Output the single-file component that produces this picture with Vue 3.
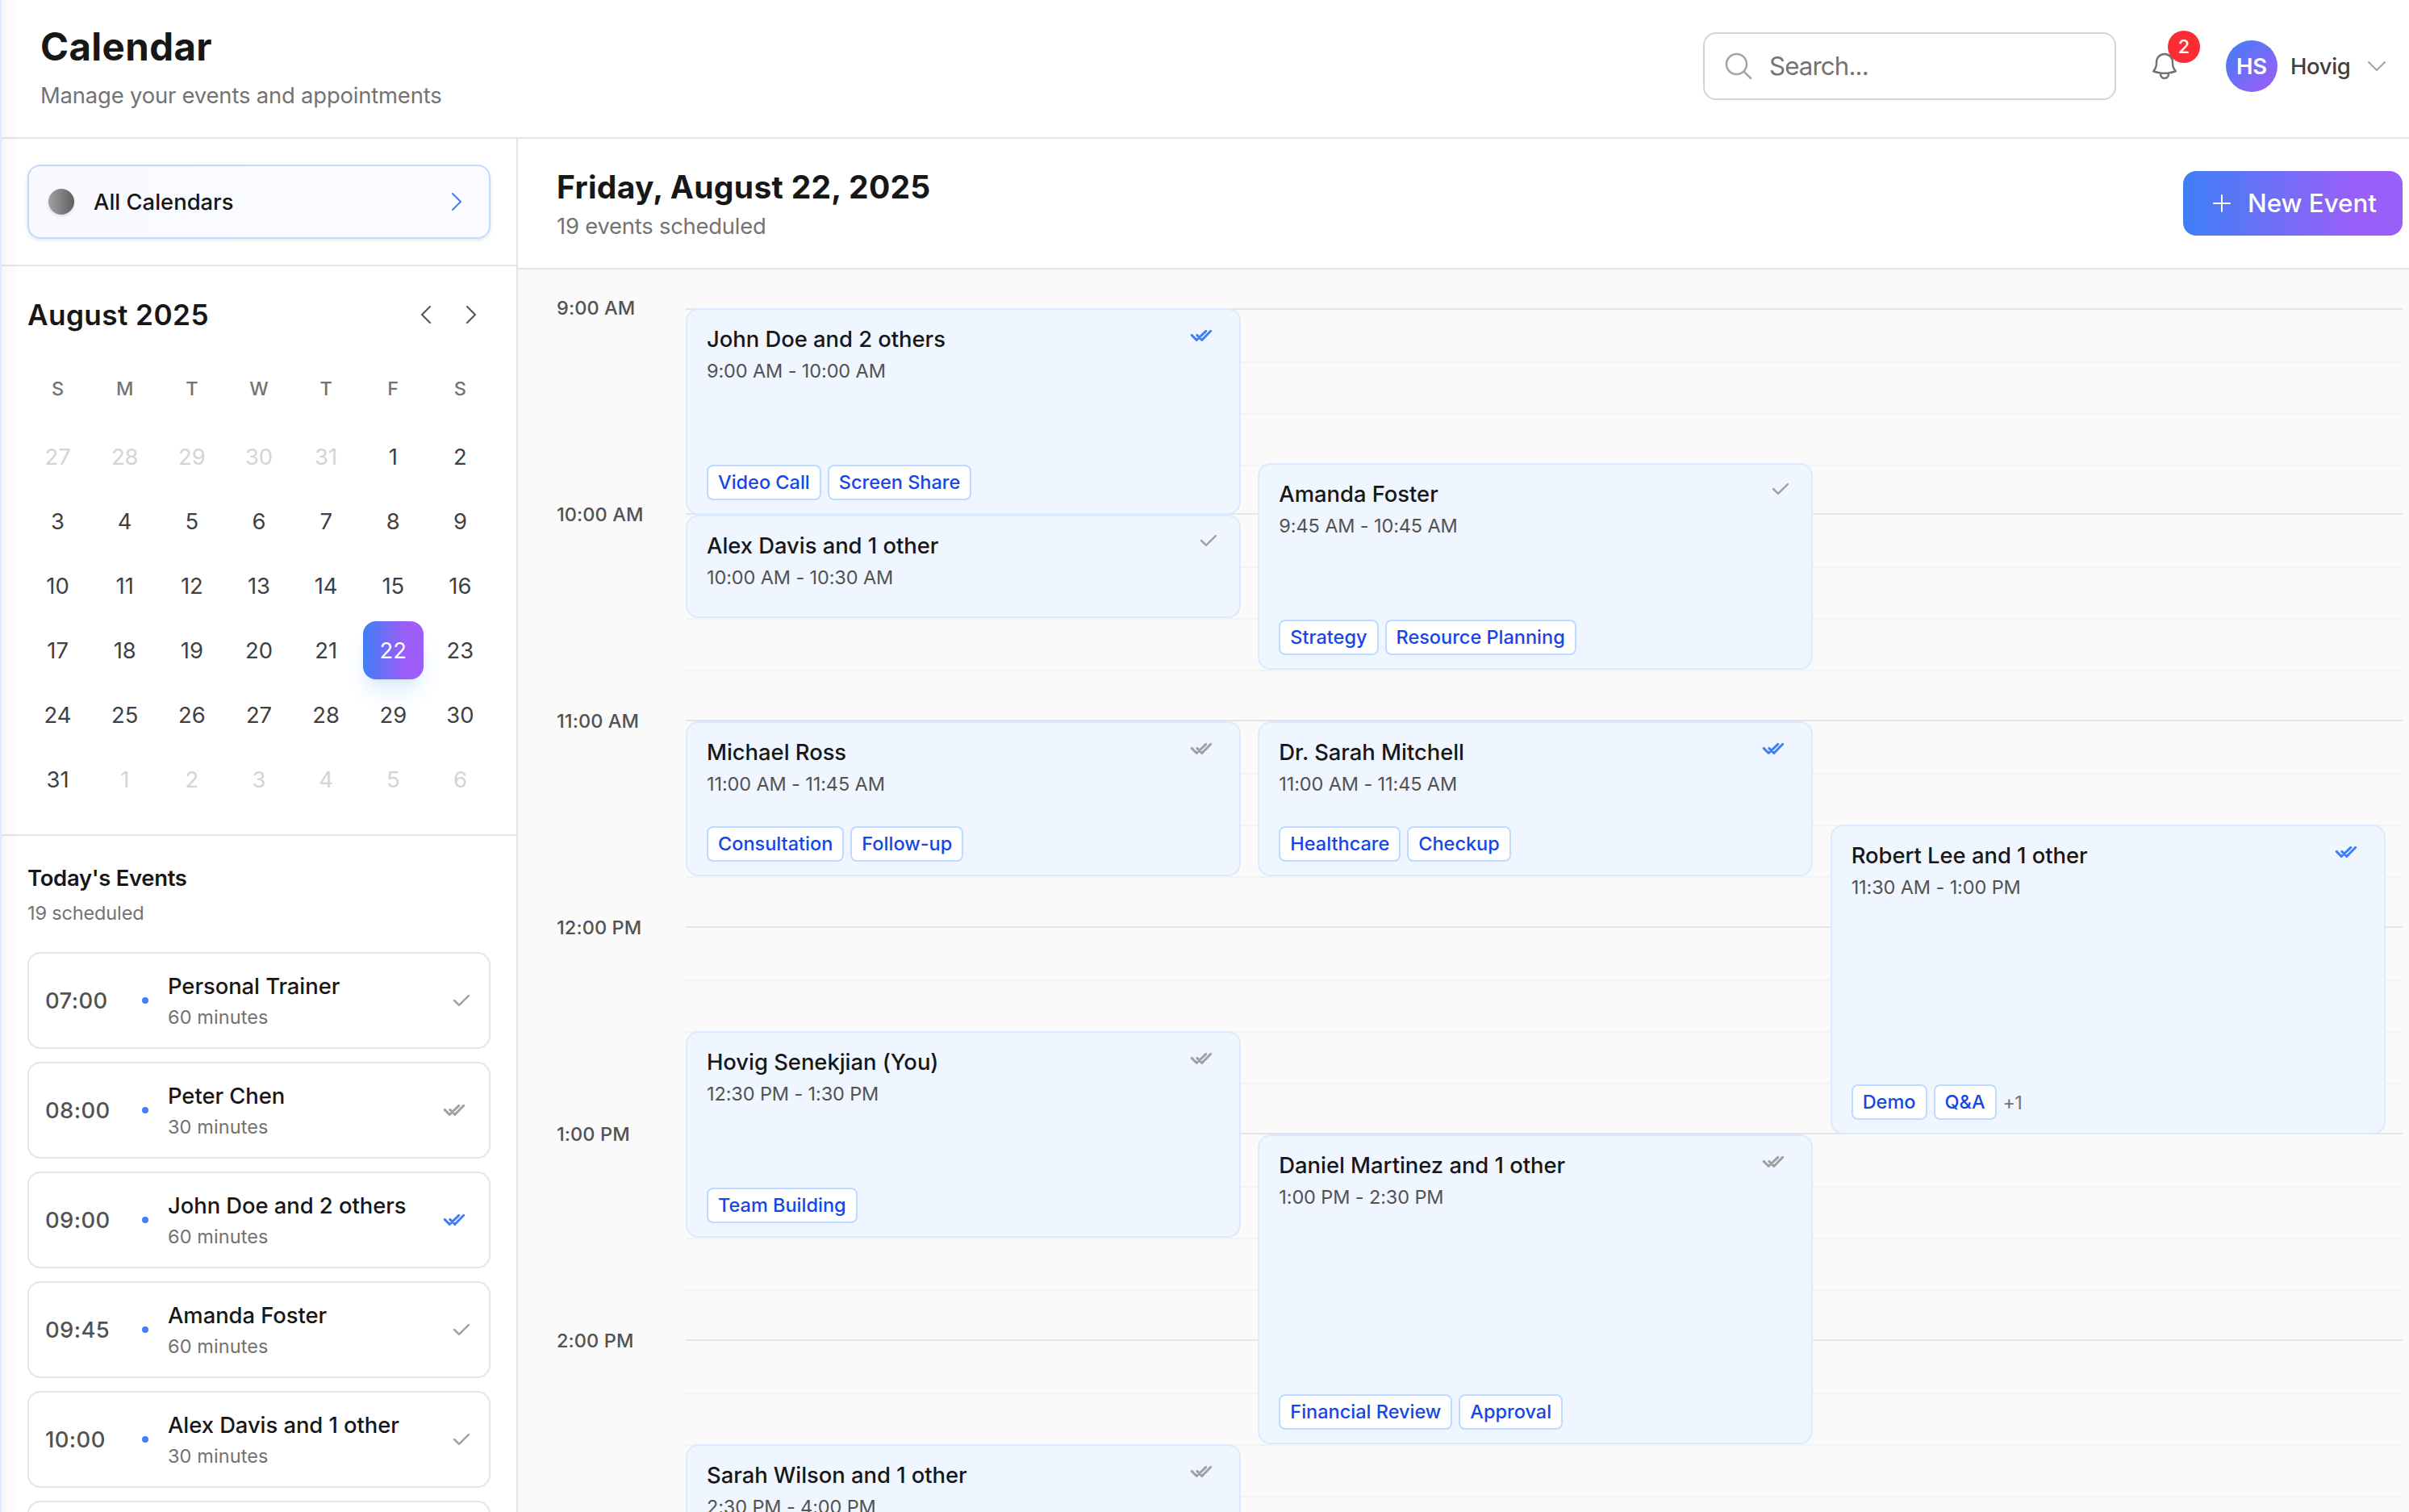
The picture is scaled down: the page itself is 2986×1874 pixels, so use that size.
<script setup>
const weekdays = ['S', 'M', 'T', 'W', 'T', 'F', 'S']

const days = []
for (let i = -4; i <= 37; i++) {
  const d = new Date(2025, 7, i)
  days.push({
    key: i,
    label: d.getDate(),
    muted: d.getMonth() !== 7,
    selected: d.getMonth() === 7 && d.getDate() === 22,
  })
}

const agenda = [
  { time: '07:00', title: 'Personal Trainer', length: '60 minutes', status: 'sent' },
  { time: '08:00', title: 'Peter Chen', length: '30 minutes', status: 'delivered' },
  { time: '09:00', title: 'John Doe and 2 others', length: '60 minutes', status: 'read' },
  { time: '09:45', title: 'Amanda Foster', length: '60 minutes', status: 'sent' },
  { time: '10:00', title: 'Alex Davis and 1 other', length: '30 minutes', status: 'sent' },
]

const hours = ['9:00 AM', '10:00 AM', '11:00 AM', '12:00 PM', '1:00 PM', '2:00 PM']

// start and length are minutes; start counts from 9:00 AM
const events = [
  { title: 'John Doe and 2 others', time: '9:00 AM - 10:00 AM', start: 0, length: 60, col: 0, status: 'read', tags: ['Video Call', 'Screen Share'] },
  { title: 'Alex Davis and 1 other', time: '10:00 AM - 10:30 AM', start: 60, length: 30, col: 0, status: 'sent', tags: [] },
  { title: 'Amanda Foster', time: '9:45 AM - 10:45 AM', start: 45, length: 60, col: 1, status: 'sent', tags: ['Strategy', 'Resource Planning'] },
  { title: 'Michael Ross', time: '11:00 AM - 11:45 AM', start: 120, length: 45, col: 0, status: 'delivered', tags: ['Consultation', 'Follow-up'] },
  { title: 'Dr. Sarah Mitchell', time: '11:00 AM - 11:45 AM', start: 120, length: 45, col: 1, status: 'read', tags: ['Healthcare', 'Checkup'] },
  { title: 'Robert Lee and 1 other', time: '11:30 AM - 1:00 PM', start: 150, length: 90, col: 2, status: 'read', tags: ['Demo', 'Q&A'], more: 1 },
  { title: 'Hovig Senekjian (You)', time: '12:30 PM - 1:30 PM', start: 210, length: 60, col: 0, status: 'delivered', tags: ['Team Building'] },
  { title: 'Daniel Martinez and 1 other', time: '1:00 PM - 2:30 PM', start: 240, length: 90, col: 1, status: 'delivered', tags: ['Financial Review', 'Approval'] },
  { title: 'Sarah Wilson and 1 other', time: '2:30 PM - 4:00 PM', start: 330, length: 90, col: 0, status: 'delivered', tags: [] },
]

const hourHeight = 256

function place(e) {
  return {
    top: (e.start / 60) * hourHeight + 'px',
    height: (e.length / 60) * hourHeight + 'px',
    left: (e.col * 100) / 3 + '%',
  }
}
</script>

<template>
  <div class="app">
    <header class="topbar">
      <div class="heading">
        <h1>Calendar</h1>
        <p>Manage your events and appointments</p>
      </div>
      <div class="tools">
        <div class="search">
          <svg class="ic40" viewBox="0 0 24 24"><path d="m21 21-5.197-5.197m0 0A7.5 7.5 0 1 0 5.196 5.196a7.5 7.5 0 0 0 10.607 10.607Z" /></svg>
          <span>Search...</span>
        </div>
        <button class="bell">
          <svg class="ic40" viewBox="0 0 24 24"><path d="M14.857 17.082a23.848 23.848 0 0 0 5.454-1.31A8.967 8.967 0 0 1 18 9.75V9A6 6 0 0 0 6 9v.75a8.967 8.967 0 0 1-2.312 6.022c1.733.64 3.56 1.085 5.455 1.31m5.714 0a24.255 24.255 0 0 1-5.714 0m5.714 0a3 3 0 1 1-5.714 0" /></svg>
          <span class="badge">2</span>
        </button>
        <div class="user">
          <span class="avatar">HS</span>
          <span class="name">Hovig</span>
          <svg class="ic32" viewBox="0 0 24 24"><path d="m19.5 8.25-7.5 7.5-7.5-7.5" /></svg>
        </div>
      </div>
    </header>

    <div class="body">
      <aside class="sidebar">
        <section class="picker">
          <button class="all">
            <span class="swatch"></span>
            <span class="all-label">All Calendars</span>
            <svg class="ic32" viewBox="0 0 24 24"><path d="m8.25 4.5 7.5 7.5-7.5 7.5" /></svg>
          </button>
        </section>

        <section class="month">
          <div class="month-head">
            <h2>August 2025</h2>
            <div class="month-nav">
              <button><svg class="ic32" viewBox="0 0 24 24"><path d="M15.75 19.5 8.25 12l7.5-7.5" /></svg></button>
              <button><svg class="ic32" viewBox="0 0 24 24"><path d="m8.25 4.5 7.5 7.5-7.5 7.5" /></svg></button>
            </div>
          </div>
          <div class="week">
            <span v-for="(w, i) in weekdays" :key="i">{{ w }}</span>
          </div>
          <div class="days">
            <span v-for="d in days" :key="d.key" class="day" :class="{ muted: d.muted, selected: d.selected }">{{ d.label }}</span>
          </div>
        </section>

        <section class="today">
          <h3>Today's Events</h3>
          <p class="count">19 scheduled</p>
          <ul>
            <li v-for="a in agenda" :key="a.time">
              <span class="at">{{ a.time }}</span>
              <i class="dot"></i>
              <div class="what">
                <b>{{ a.title }}</b>
                <small>{{ a.length }}</small>
              </div>
              <svg v-if="a.status === 'sent'" class="tick" viewBox="0 0 28 28"><path d="M5.1 14 11 19.9 22.9 8.1" /></svg>
              <svg v-else class="ticks" :class="a.status" viewBox="0 0 46 32"><path d="m11.2 15.4 6 6.1L28.8 10.3M17.8 15.4l6 6.1L34.7 10.3" /></svg>
            </li>
            <li></li>
          </ul>
        </section>
      </aside>

      <main class="main">
        <div class="day-head">
          <div>
            <h2>Friday, August 22, 2025</h2>
            <p>19 events scheduled</p>
          </div>
          <button class="new">
            <svg class="ic32" viewBox="0 0 24 24"><path d="M12 4.5v15m7.5-7.5h-15" /></svg>
            <span>New Event</span>
          </button>
        </div>

        <div class="schedule">
          <div class="hours">
            <div v-for="h in hours" :key="h" class="hour"><span>{{ h }}</span></div>
          </div>
          <div class="grid">
            <div v-for="h in hours" :key="h" class="row">
              <i></i><i></i><i></i><i></i>
            </div>
            <article v-for="e in events" :key="e.title" class="event" :style="place(e)">
              <div class="event-head">
                <div>
                  <h4>{{ e.title }}</h4>
                  <p>{{ e.time }}</p>
                </div>
                <svg v-if="e.status === 'sent'" class="tick" viewBox="0 0 28 28"><path d="M5.1 14 11 19.9 22.9 8.1" /></svg>
                <svg v-else class="ticks" :class="e.status" viewBox="0 0 46 32"><path d="m11.2 15.4 6 6.1L28.8 10.3M17.8 15.4l6 6.1L34.7 10.3" /></svg>
              </div>
              <div v-if="e.tags.length" class="tags">
                <span v-for="t in e.tags" :key="t" class="tag">{{ t }}</span>
                <span v-if="e.more" class="more">+{{ e.more }}</span>
              </div>
            </article>
          </div>
        </div>
      </main>
    </div>
    <div class="edge"></div>
  </div>
</template>

<style>
html,
body {
  margin: 0;
  overflow: hidden;
  background: #fff;
}
</style>

<style scoped>
.app {
  position: relative;
  display: flex;
  flex-direction: column;
  width: 2986px;
  height: 1874px;
  overflow: hidden;
  background: #fff;
  color: #171717;
  font-family: Inter, 'Liberation Sans', sans-serif;
  font-size: 27.4px;
}
.app * {
  box-sizing: border-box;
}
h1, h2, h3, h4, p, ul {
  margin: 0;
  padding: 0;
}
button {
  margin: 0;
  padding: 0;
  border: 0;
  background: none;
  font: inherit;
  color: inherit;
}
svg {
  display: block;
  flex: none;
  fill: none;
  stroke: currentColor;
  stroke-width: 1.5;
  stroke-linecap: round;
  stroke-linejoin: round;
}
.ic40 { width: 40px; height: 40px; }
.ic32 { width: 32px; height: 32px; }

.edge {
  position: absolute;
  inset: 0 auto 0 0;
  width: 26px;
  border-left: 2px solid #dbeafe;
  background: linear-gradient(to right, rgba(0, 0, 0, 0.03), rgba(0, 0, 0, 0));
}

/* top bar */
.topbar {
  display: flex;
  justify-content: space-between;
  flex: none;
  height: 172px;
  padding: 0 24px 0 50px;
  border-bottom: 2px solid #e5e5e5;
}
.heading { padding-top: 26px; }
h1 {
  font-size: 47.4px;
  font-weight: 700;
  line-height: 64px;
  letter-spacing: 0.4px;
}
.heading p {
  margin-top: 8px;
  line-height: 40px;
  letter-spacing: -0.17px;
  color: #737373;
}
.tools {
  display: flex;
  align-items: center;
  height: 164px;
}
.search {
  display: flex;
  align-items: center;
  gap: 18px;
  width: 512px;
  height: 84px;
  margin-right: 24px;
  padding: 0 22px;
  border: 2px solid #d4d4d4;
  border-radius: 16px;
  color: #a3a3a3;
}
.search span {
  font-size: 31.3px;
  letter-spacing: -0.9px;
  color: #737373;
}
.bell {
  position: relative;
  margin-right: 40px;
  padding: 16px;
  color: #737373;
}
.badge {
  position: absolute;
  top: -8px;
  right: -8px;
  width: 40px;
  height: 40px;
  border-radius: 50%;
  background: #fb2c36;
  color: #fff;
  font-size: 23.5px;
  font-weight: 500;
  line-height: 40px;
  text-align: center;
}
.user {
  display: flex;
  align-items: center;
  gap: 16px;
  color: #a3a3a3;
}
.avatar {
  width: 64px;
  height: 64px;
  border-radius: 50%;
  background: linear-gradient(135deg, #3f7ff7, #a45af8);
  color: #fff;
  font-weight: 600;
  line-height: 64px;
  text-align: center;
}
.name {
  width: 75px;
  font-weight: 500;
  letter-spacing: -0.3px;
  color: #404040;
}

.body {
  display: flex;
  flex: 1;
  min-height: 0;
}

/* sidebar */
.sidebar {
  flex: none;
  width: 642px;
  border-right: 2px solid #e5e5e5;
}
.picker {
  padding: 32px 32px 32px 34px;
  border-bottom: 2px solid #e5e5e5;
}
.all {
  display: flex;
  align-items: center;
  width: 574px;
  height: 92px;
  padding: 0 24px;
  border: 2px solid #bedbff;
  border-radius: 16px;
  background: linear-gradient(to right, #f8faff, #fafaff 50%, #fcfbff);
  box-shadow: 0 2px 5px rgba(0, 0, 0, 0.1);
  color: #3f7ff7;
}
.swatch {
  width: 32px;
  height: 32px;
  margin-right: 24px;
  border-radius: 50%;
  background: linear-gradient(to right, #a1a1a1, #606060);
  box-shadow: 0 2px 4px rgba(0, 0, 0, 0.12);
}
.all-label {
  flex: 1;
  font-weight: 500;
  text-align: left;
  color: #171717;
}
.month {
  padding: 32px 32px 32px 34px;
  border-bottom: 2px solid #e5e5e5;
}
.month-head {
  display: flex;
  align-items: center;
  justify-content: space-between;
  width: 574px;
  height: 56px;
}
.month-head h2 {
  padding-bottom: 1px;
  font-size: 35.2px;
  font-weight: 600;
  letter-spacing: 0.4px;
}
.month-nav {
  display: flex;
  gap: 8px;
  color: #525252;
}
.month-nav button { padding: 8px; }
.week,
.days {
  display: grid;
  grid-template-columns: repeat(7, 1fr);
  gap: 8px;
  width: 574px;
  text-align: center;
}
.week {
  margin: 32px 0 16px;
  font-size: 23.5px;
  font-weight: 500;
  line-height: 64px;
  color: #737373;
}
.day {
  height: 72px;
  border-radius: 16px;
  line-height: 72px;
  color: #404040;
}
.day.muted { color: #d4d4d4; }
.day.selected {
  background: linear-gradient(to right, #3f7ff7, #9d5df8 70%);
  box-shadow: 0 20px 30px -6px #dbeafe, 0 8px 12px -8px #bedbff;
  color: #fff;
}

.today { padding: 32px 32px 0 34px; }
h3 {
  font-size: 27.4px;
  font-weight: 600;
  line-height: 40px;
  letter-spacing: -0.27px;
}
.count {
  margin: 8px 0 32px;
  font-size: 23.5px;
  line-height: 32px;
  letter-spacing: -0.15px;
  color: #737373;
}
ul {
  display: flex;
  flex-direction: column;
  gap: 16px;
  list-style: none;
}
li {
  display: flex;
  align-items: center;
  width: 574px;
  height: 120px;
  padding: 0 20px;
  border: 2px solid #e5e5e5;
  border-radius: 16px;
}
.at {
  width: 120px;
  font-weight: 500;
  letter-spacing: 0.4px;
  color: #525252;
}
.dot {
  width: 8px;
  height: 8px;
  margin-right: 24px;
  border-radius: 50%;
  background: #3f7ff7;
}
.what {
  display: flex;
  flex: 1;
  flex-direction: column;
  gap: 5px;
  padding-top: 1px;
  white-space: nowrap;
}
.what b {
  font-weight: 500;
  line-height: 36px;
  letter-spacing: -0.05px;
}
.what small {
  font-size: 23.5px;
  line-height: 32px;
  letter-spacing: 0.1px;
  color: #737373;
}
.tick,
.ticks {
  width: 28px;
  height: 28px;
  stroke-width: 2.5;
  color: #a1a1a1;
}
.ticks {
  width: 46px;
  height: 32px;
  stroke-width: 3;
}
.ticks.read { color: #3f7ff7; }

/* day view */
.main {
  display: flex;
  flex: 1;
  flex-direction: column;
  min-width: 0;
}
.day-head {
  display: flex;
  align-items: center;
  justify-content: space-between;
  flex: none;
  height: 162px;
  padding: 0 8px 0 48px;
  border-bottom: 2px solid #e5e5e5;
}
.day-head h2 {
  font-size: 39px;
  font-weight: 700;
  line-height: 56px;
  letter-spacing: 0.3px;
}
.day-head p {
  line-height: 40px;
  letter-spacing: -0.22px;
  color: #737373;
}
.new {
  display: flex;
  align-items: center;
  gap: 16px;
  width: 272px;
  height: 80px;
  padding-left: 32px;
  border-radius: 16px;
  background: linear-gradient(to right, #3f7ff7, #9b5ff9 80%);
  color: #fff;
  font-size: 31.3px;
  font-weight: 500;
  white-space: nowrap;
}
.schedule {
  display: flex;
  flex: 1;
  min-height: 0;
  padding: 48px 8px 0 48px;
  background: #fafafa;
}
.hours {
  display: flex;
  flex: none;
  flex-direction: column;
  width: 160px;
}
.hour {
  display: flex;
  flex: none;
  height: 256px;
  font-size: 23.5px;
  font-weight: 500;
  line-height: 32px;
  letter-spacing: 0.1px;
  color: #525252;
}
.hour span { margin-top: -16px; }
.grid {
  position: relative;
  flex: 1;
}
.row {
  display: flex;
  flex-direction: column;
  height: 256px;
  border-bottom: 2px solid #e5e5e5;
}
.row:first-child { border-top: 2px solid #e5e5e5; }
.row i {
  flex: none;
  height: 64px;
  border-top: 2px solid #f3f3f3;
}
.row i:first-child { border-top: 0; }
.row i:last-child {
  flex: 1 1 0;
  height: auto;
}
.event {
  position: absolute;
  display: flex;
  flex-direction: column;
  justify-content: space-between;
  width: 32.33%;
  padding: 16px 24px;
  border: 2px solid #dbeafe;
  border-radius: 16px;
  background: #eff6ff;
  white-space: nowrap;
}
.event-head {
  display: flex;
  justify-content: space-between;
}
h4 {
  font-size: 27.4px;
  font-weight: 500;
  line-height: 40px;
  letter-spacing: -0.03px;
}
.event p {
  margin-top: 4px;
  font-size: 23.5px;
  line-height: 32px;
  letter-spacing: -0.12px;
  color: #525252;
}
.tags {
  display: flex;
  align-items: center;
  gap: 8px;
}
.tag {
  height: 44px;
  padding: 0 12px;
  border: 2px solid #bedbff;
  border-radius: 8px;
  background: #fff;
  color: #1447e6;
  font-size: 23.5px;
  font-weight: 500;
  line-height: 40px;
}
.more {
  font-size: 23.5px;
  letter-spacing: -0.8px;
  color: #737373;
}
</style>
